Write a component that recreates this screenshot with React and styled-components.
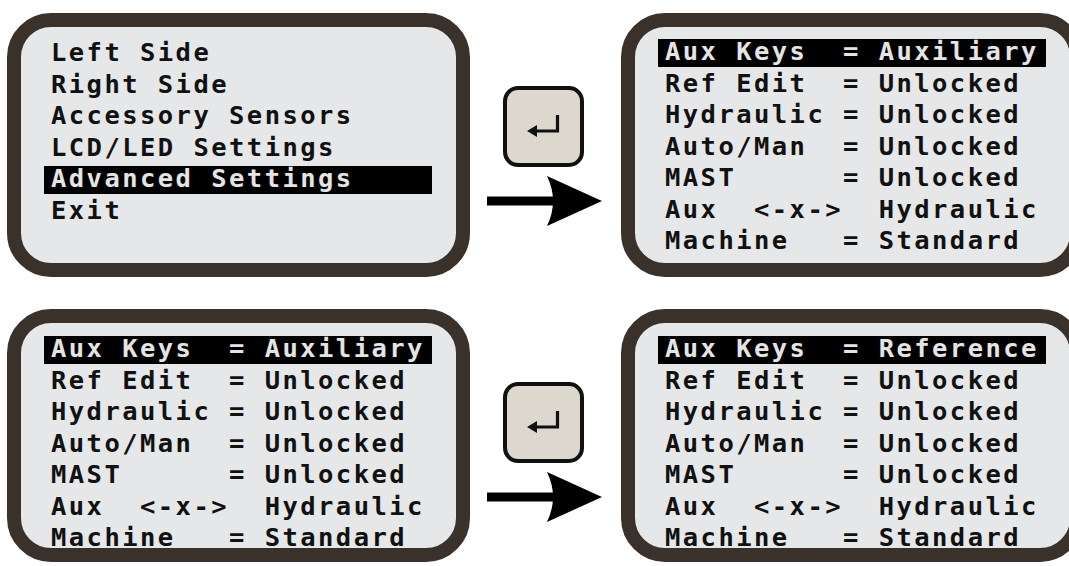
import React from 'react'
import styled, { createGlobalStyle } from 'styled-components'

const GlobalStyle = createGlobalStyle`
  html, body {
    margin: 0;
    padding: 0;
    background: #fff;
    overflow: hidden;
  }
`

const Page = styled.div`
  display: grid;
  grid-template-columns: 463px 151px 463px;
  grid-template-rows: 264px 253px;
  row-gap: 32px;
  padding: 13px 0 0 7px;
  width: max-content;
`

const Screen = styled.div`
  box-sizing: border-box;
  border: 14px solid #3a312b;
  border-radius: 44px;
  background: #e6e7e8;
  padding: ${({ $top }) => $top}px 0 0 23px;
  display: flex;
  flex-direction: column;
  gap: 3.5px;
  overflow: hidden;
`

const Line = styled.div`
  box-sizing: border-box;
  flex-shrink: 0;
  width: 388px;
  height: 28px;
  line-height: 25px;
  padding-left: 7px;
  white-space: pre;
  font-family: "DejaVu Sans Mono", "Liberation Mono", monospace;
  font-weight: bold;
  font-size: 25.5px;
  letter-spacing: 2.45px;
  background: ${({ $active }) => ($active ? '#000' : 'transparent')};
  color: ${({ $active }) => ($active ? '#e4e4e4' : '#111')};
`

const Middle = styled.div`
  display: flex;
  flex-direction: column;
  align-items: flex-start;
  padding: 73px 0 0 17px;
`

const EnterKey = styled.div`
  box-sizing: border-box;
  width: 81px;
  height: 81px;
  margin-left: 16px;
  border: 4px solid #111;
  border-radius: 15px;
  background: #ddd8cd;
  display: flex;
  align-items: center;
  justify-content: center;
  padding-bottom: 4px;
`

const Arrow = styled.svg`
  margin-top: 9px;
`

const menu = [
  'Left Side',
  'Right Side',
  'Accessory Sensors',
  'LCD/LED Settings',
  'Advanced Settings',
  'Exit',
]

const settings = (aux) => [
  `Aux Keys  = ${aux}`,
  'Ref Edit  = Unlocked',
  'Hydraulic = Unlocked',
  'Auto/Man  = Unlocked',
  'MAST      = Unlocked',
  'Aux  <-x->  Hydraulic',
  'Machine   = Standard',
]

const Display = ({ lines, active, top = 13 }) => (
  <Screen $top={top}>
    {lines.map((l, i) => (
      <Line key={i} $active={i === active}>{l}</Line>
    ))}
  </Screen>
)

const Step = () => (
  <Middle>
    <EnterKey>
      <svg width="34" height="24" viewBox="0 0 34 24">
        <path d="M30.5 2 V18 H8" fill="none" stroke="#111" strokeWidth="3.2" />
        <path d="M0 18 L10 12 L10 24 Z" fill="#111" />
      </svg>
    </EnterKey>
    <Arrow width="116" height="50" viewBox="0 0 116 50">
      <rect x="0" y="20.5" width="68" height="9" fill="#000" />
      <path d="M60 0 L115 25 L60 50 Q72 25 60 0 Z" fill="#000" />
    </Arrow>
  </Middle>
)

export default function App() {
  return (
    <>
      <GlobalStyle />
      <Page>
        <Display lines={menu} active={4} />
        <Step />
        <Display lines={settings('Auxiliary')} active={0} top={12} />
        <Display lines={settings('Auxiliary')} active={0} />
        <Step />
        <Display lines={settings('Reference')} active={0} />
      </Page>
    </>
  )
}
